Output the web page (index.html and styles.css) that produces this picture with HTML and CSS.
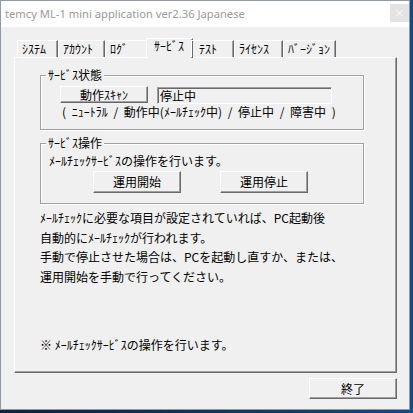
FILE: index.html
```html
<!DOCTYPE html>
<html lang="ja">
<head>
<meta charset="utf-8">
<title>temcy ML-1</title>
<link rel="stylesheet" href="styles.css">
</head>
<body>
<div class="window">
  <div class="titlebar">
    <span class="title">temcy ML-1 mini application ver2.36 Japanese</span>
    <span class="close">×</span>
  </div>
  <div class="client">
    <div class="tabs">
      <div class="tab t1">ｼｽﾃﾑ</div>
      <div class="tab t2">ｱｶｳﾝﾄ</div>
      <div class="tab t3">ﾛｸﾞ</div>
      <div class="tab t4 sel">ｻｰﾋﾞｽ</div>
      <div class="tab t5">ﾃｽﾄ</div>
      <div class="tab t6">ﾗｲｾﾝｽ</div>
      <div class="tab t7">ﾊﾞｰｼﾞｮﾝ</div>
    </div>
    <div class="panel">
      <div class="group g1">
        <span class="glabel">ｻｰﾋﾞｽ状態</span>
        <div class="row">
          <div class="btn scan">動作ｽｷｬﾝ</div>
          <div class="textbox">停止中</div>
        </div>
        <div class="hint">( ﾆｭｰﾄﾗﾙ / 動作中(ﾒｰﾙﾁｪｯｸ中) / 停止中 / 障害中 )</div>
      </div>
      <div class="group g2">
        <span class="glabel">ｻｰﾋﾞｽ操作</span>
        <div class="desc">ﾒｰﾙﾁｪｯｸｻｰﾋﾞｽの操作を行います。</div>
        <div class="btnrow">
          <div class="btn op">運用開始</div>
          <div class="btn op">運用停止</div>
        </div>
      </div>
      <div class="para">
        <div>ﾒｰﾙﾁｪｯｸに必要な項目が設定されていれば、PC起動後</div>
        <div>自動的にﾒｰﾙﾁｪｯｸが行われます。</div>
        <div>手動で停止させた場合は、PCを起動し直すか、または、</div>
        <div>運用開始を手動で行ってください。</div>
      </div>
      <div class="note">※ ﾒｰﾙﾁｪｯｸｻｰﾋﾞｽの操作を行います。</div>
    </div>
    <div class="btn quit">終了</div>
  </div>
</div>
</body>
</html>
```
FILE: styles.css
```css
* { box-sizing: border-box; }
html, body { margin: 0; padding: 0; }
body {
  width: 413px;
  height: 413px;
  overflow: hidden;
  background: linear-gradient(90deg, #0a2240 0%, #0b3764 55%, #0d4c88 100%);
  font-family: "Noto Sans CJK JP", sans-serif;
  font-size: 12px;
  line-height: 14px;
  color: #000;
}
.window {
  width: 410px;
  height: 410px;
  border: 1px solid #8e9aa6;
  background: #f0f0f0;
  display: flex;
  flex-direction: column;
}
.titlebar {
  height: 26px;
  background: #fff;
  display: flex;
  justify-content: space-between;
  align-items: flex-start;
}
.title {
  font-family: "Noto Sans", sans-serif;
  font-size: 11.2px;
  line-height: 16px;
  color: #9a9a9a;
  padding: 5px 0 0 4px;
  white-space: nowrap;
}
.close {
  width: 19px;
  height: 18px;
  margin-top: 3px;
  background: #e3e3e3;
  color: #f6f6f6;
  font-family: "DejaVu Sans", sans-serif;
  font-size: 13px;
  line-height: 18px;
  text-align: center;
}
.client {
  flex: 1;
  padding: 11px 12px 0 13px;
  display: flex;
  flex-direction: column;
}
.tabs {
  display: flex;
  align-items: flex-end;
  height: 19px;
  padding-left: 3px;
  position: relative;
  z-index: 1;
}
.tab {
  height: 17px;
  border-top: 1px solid #fff;
  border-left: 1px solid #fff;
  border-right: 1px solid #696969;
  box-shadow: inset -1px 0 0 #a0a0a0;
  padding-left: 4px;
  line-height: 16px;
  white-space: nowrap;
}
.t1 { width: 41px; }
.t2 { width: 47px; }
.t3 { width: 43px; }
.t4 { width: 47px; }
.t5 { width: 43px; padding-left: 7px; }
.t6 { width: 49px; }
.t7 { width: 53px; }
.tab.sel {
  height: 20px;
  margin: 0 -2px -1px;
  background: #f0f0f0;
  padding-left: 7px;
  line-height: 14px;
}
.panel {
  height: 316px;
  border-top: 1px solid #fff;
  border-left: 1px solid #fff;
  border-right: 1px solid #696969;
  border-bottom: 1px solid #696969;
  box-shadow: inset -1px -1px 0 #a0a0a0;
  padding: 17px 0 0 25px;
  display: flex;
  flex-direction: column;
  align-items: flex-start;
}
.group {
  position: relative;
  width: 324px;
  border: 1px solid #a0a0a0;
  box-shadow: inset 1px 1px 0 #fff, 1px 1px 0 #fff;
  padding: 10px 8px 10px 8px;
}
.glabel {
  position: absolute;
  top: -8px;
  left: 5px;
  padding: 0 2px;
  background: #f0f0f0;
  white-space: nowrap;
}
.row {
  display: flex;
  align-items: flex-start;
  gap: 9px;
  padding-left: 11px;
}
.btn {
  background: #f0f0f0;
  border-top: 1px solid #fff;
  border-left: 1px solid #fff;
  border-right: 1px solid #696969;
  border-bottom: 1px solid #696969;
  box-shadow: inset -1px -1px 0 #a0a0a0;
  display: flex;
  align-items: center;
  justify-content: center;
  white-space: nowrap;
}
.scan { width: 88px; height: 17px; }
.textbox {
  width: 175px;
  height: 17px;
  margin-top: 1px;
  border-top: 1px solid #a0a0a0;
  border-left: 1px solid #a0a0a0;
  border-right: 1px solid #fff;
  border-bottom: 1px solid #fff;
  box-shadow: inset 1px 1px 0 #696969;
  padding: 1px 0 0 2px;
  line-height: 14px;
}
.hint {
  margin-top: 1px;
  padding-left: 13px;
  word-spacing: 3px;
  white-space: nowrap;
}
.g1 { margin-bottom: 13px; }
.g2 { padding-bottom: 10px; }
.desc { white-space: nowrap; }
.btnrow {
  display: flex;
  gap: 39px;
  margin-top: 3px;
  padding-left: 44px;
}
.op { width: 88px; height: 22px; }
.para {
  margin-top: 4px;
  line-height: 19.5px;
  white-space: nowrap;
}
.note {
  margin-top: 49px;
  line-height: 19.5px;
  white-space: nowrap;
}
.quit {
  align-self: flex-end;
  margin-top: 5px;
  width: 88px;
  height: 21px;
}
```
